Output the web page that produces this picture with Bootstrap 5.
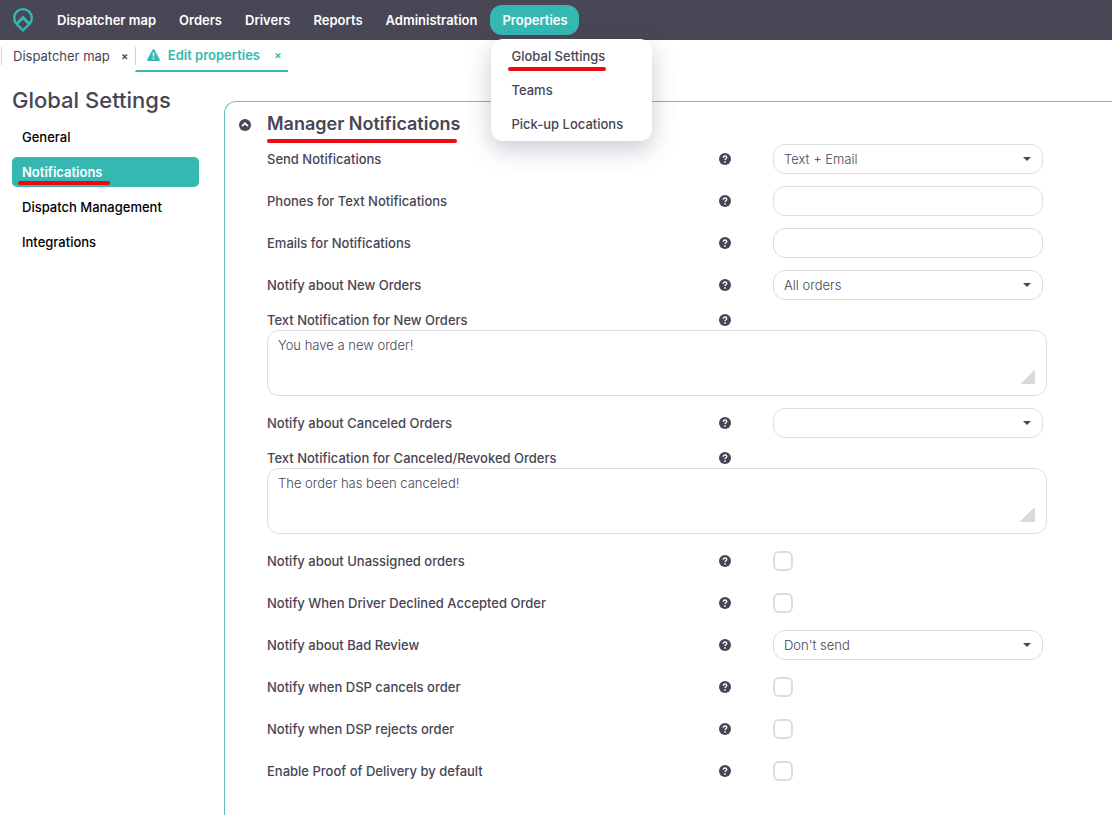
<!DOCTYPE html>
<html lang="en">
<head>
<meta charset="utf-8">
<meta name="viewport" content="width=device-width, initial-scale=1">
<title>Global Settings</title>
<link href="https://cdn.jsdelivr.net/npm/bootstrap@5.3.0/dist/css/bootstrap.min.css" rel="stylesheet">
<style>
:root { --ink: #484554; --teal: #35b8b2; --line: #dcdcdc; --red: #ee0a10; }
body { font-family: Inter, "Open Sans", sans-serif; font-size: 13px; line-height: 20px; color: var(--ink); min-height: 100vh; overflow-x: hidden; }
.topbar { background: #494655; height: 40px; padding: 0 12px; }
.topbar .brand-mark { width: 22px; margin-right: 11px; }
.topbar .nav-link { color: #fff; font-size: 13px; font-weight: 600; line-height: 20px; padding: 5px 11px 5px 12px; white-space: nowrap; }
.topbar .nav-link.active { background: var(--teal); border-radius: 12px; }
.topbar .dropdown { margin-left: 2px; }
.topbar .dropdown-menu { top: 34px; left: 1px; min-width: 161px; padding: 0; border: 0; border-radius: 12px; box-shadow: 0 8px 24px rgba(60, 70, 100, .28); }
.topbar .dropdown-item { font-size: 13px; font-weight: 500; line-height: 20px; padding: 7px 20px; color: var(--ink); background: none; }
.doc-tabs { height: 32px; padding-left: 1px; }
.doc-tab { border-left: 1px solid transparent; position: relative; padding: 0 6px 0 11px; height: 32px; }
.doc-tab::before { content: ""; position: absolute; left: -1px; top: 7px; height: 18px; border-left: 1px solid #d4d4d4; }
.doc-tab a { color: var(--ink); text-decoration: none; font-size: 13px; }
.doc-tab button { border: 0; background: none; padding: 0; width: 8px; font-size: 11px; line-height: 20px; font-weight: 600; color: inherit; margin-left: 11px; }
.doc-tab.current { border-bottom: 2px solid var(--teal); color: var(--teal); }
.doc-tab.current a { color: var(--teal); font-weight: 600; }
.doc-tab.current button { margin-left: 14px; }
.side { width: 224px; padding: 15px 25px 0 12px; }
.side h1 { font-size: 22px; line-height: 26px; font-weight: 500; margin: 0 0 9px; white-space: nowrap; }
.side .nav { gap: 5px; }
.side .nav-link { color: #000; font-size: 13px; font-weight: 500; line-height: 20px; padding: 5px 10px; border-radius: 5px; }
.side .nav-link.active { background: var(--teal); color: #fff; font-weight: 600; }
.panel { margin-top: 29px; border: solid #63c1bd; border-width: 1px 0 0 1px; border-radius: 12px 0 0 0; padding: 10px 12px 24px 13px; min-width: 0; }
.toggle { border: 0; background: none; padding: 0; width: 14px; height: 26px; line-height: 0; margin-right: 15px; }
.panel h2 { font-size: 18px; line-height: 24px; font-weight: 600; margin: 0 0 2px; }
.settings { max-width: 780px; }
.setting { display: grid; grid-template-columns: minmax(0, 1fr) 54px 270px; align-items: center; min-height: 42px; padding-right: 4px; font-weight: 500; }
.setting.stacked { min-height: 24px; padding-top: 4px; }
.help { border: 0; background: none; padding: 0; width: 12px; height: 12px; line-height: 0; display: flex; }
.settings .form-control, .settings .form-select { border: 1px solid var(--line); border-radius: 12px; font-size: 13px; font-weight: 300; line-height: 20px; color: var(--ink); padding: 4px 10px; height: 30px; }
.settings .form-select { background-image: url("data:image/svg+xml,%3Csvg xmlns='http://www.w3.org/2000/svg' viewBox='0 0 8 4'%3E%3Cpath fill='%23484554' d='M0 0h8L4 4z'/%3E%3C/svg%3E"); background-size: 8px 4px; background-position: right 11px center; }
.settings textarea.form-control { height: 66px; resize: none; }
.area { position: relative; margin-bottom: 6px; }
.area::after { content: ""; position: absolute; right: 12px; bottom: 12px; width: 15px; height: 15px; background: linear-gradient(135deg, transparent 50%, #dadada 50%); pointer-events: none; }
.settings .form-check-input { width: 20px; height: 20px; margin: 0; border: 2px solid var(--line); border-radius: 6px; }
.marked { position: relative; }
.marked::after { content: ""; position: absolute; left: 0; bottom: -4px; width: 100%; height: 4px; border-radius: 2px; background: var(--red); }
.dropdown-item .marked::after { left: -3px; bottom: -7px; width: 98px; }
.side .marked::after { left: -4px; width: 92px; bottom: -5px; }
.panel .marked::after { bottom: -9px; width: 190px; }
</style>
</head>
<body class="d-flex flex-column">
<svg class="d-none" aria-hidden="true">
  <symbol id="help" viewBox="0 0 12 12"><circle cx="6" cy="6" r="6" fill="#484554"/><path d="M4.200 4.700c0-2.300 3.600-2.200 3.600-.1C7.800 5.900 6 5.700 6 7.100" fill="none" stroke="#fff" stroke-width="1.300"/><circle cx="6" cy="8.900" r=".85" fill="#fff"/></symbol>
</svg>
<nav class="topbar d-flex align-items-center">
  <a href="#" class="brand-mark d-flex" aria-label="Home"><svg width="22" height="26" viewBox="0 0 22 26"><path d="M11 23.300 4.600 17A8.800 8.800 0 1 1 17.400 17Z" fill="none" stroke="#35b8b2" stroke-width="2.400"/><path d="M4.800 16.800 11 10.700 17.200 16.800" fill="none" stroke="#35b8b2" stroke-width="3"/></svg></a>
  <ul class="nav flex-nowrap">
    <li class="nav-item"><a class="nav-link" href="#">Dispatcher map</a></li>
    <li class="nav-item"><a class="nav-link" href="#">Orders</a></li>
    <li class="nav-item"><a class="nav-link" href="#">Drivers</a></li>
    <li class="nav-item"><a class="nav-link" href="#">Reports</a></li>
    <li class="nav-item"><a class="nav-link" href="#">Administration</a></li>
    <li class="nav-item dropdown"><a class="nav-link active" href="#" aria-expanded="true">Properties</a>
      <ul class="dropdown-menu show">
        <li><a class="dropdown-item" href="#"><span class="marked">Global Settings</span></a></li>
        <li><a class="dropdown-item" href="#">Teams</a></li>
        <li><a class="dropdown-item" href="#">Pick-up Locations</a></li>
      </ul>
    </li>
  </ul>
</nav>
<div class="doc-tabs d-flex">
  <div class="doc-tab d-flex align-items-center"><a href="#">Dispatcher map</a><button type="button" aria-label="Close Dispatcher map">×</button></div>
  <div class="doc-tab current d-flex align-items-center"><svg width="13" height="12" viewBox="0 0 13 12" class="me-2"><path d="M5.600.6q.9-1.200 1.800 0L12.800 10.400q.4 1.400-1 1.600H1.200Q-.2 11.800.2 10.400Z" fill="#35b8b2"/><path d="M6.500 3.500v4M6.500 8.700v1.600" stroke="#fff" stroke-width="1.600"/></svg><a href="#">Edit properties</a><button type="button" aria-label="Close Edit properties">×</button></div>
</div>
<div class="d-flex flex-grow-1">
  <aside class="side flex-shrink-0">
    <h1>Global Settings</h1>
    <nav class="nav flex-column">
      <a class="nav-link" href="#">General</a>
      <a class="nav-link active" href="#"><span class="marked">Notifications</span></a>
      <a class="nav-link" href="#">Dispatch Management</a>
      <a class="nav-link" href="#">Integrations</a>
    </nav>
  </aside>
  <main class="panel d-flex align-items-start flex-grow-1">
    <button class="toggle flex-shrink-0" type="button" aria-label="Collapse section"><svg width="12" height="12" viewBox="0 0 12 12"><circle cx="6" cy="6" r="6" fill="#484554"/><path d="M3 7.200 6 4.300 9 7.200" fill="none" stroke="#fff" stroke-width="1.800"/></svg></button>
    <form class="settings flex-grow-1">
      <h2><span class="marked">Manager Notifications</span></h2>
      <div class="setting"><label for="send">Send Notifications</label><button type="button" class="help" aria-label="Help"><svg width="12" height="12"><use href="#help"/></svg></button><select id="send" class="form-select"><option>Text + Email</option></select></div>
      <div class="setting"><label for="phones">Phones for Text Notifications</label><button type="button" class="help" aria-label="Help"><svg width="12" height="12"><use href="#help"/></svg></button><input id="phones" type="text" class="form-control"></div>
      <div class="setting"><label for="emails">Emails for Notifications</label><button type="button" class="help" aria-label="Help"><svg width="12" height="12"><use href="#help"/></svg></button><input id="emails" type="text" class="form-control"></div>
      <div class="setting"><label for="new">Notify about New Orders</label><button type="button" class="help" aria-label="Help"><svg width="12" height="12"><use href="#help"/></svg></button><select id="new" class="form-select"><option>All orders</option></select></div>
      <div class="setting stacked"><label for="newtext">Text Notification for New Orders</label><button type="button" class="help" aria-label="Help"><svg width="12" height="12"><use href="#help"/></svg></button></div>
      <div class="area"><textarea id="newtext" class="form-control">You have a new order!</textarea></div>
      <div class="setting"><label for="canceled">Notify about Canceled Orders</label><button type="button" class="help" aria-label="Help"><svg width="12" height="12"><use href="#help"/></svg></button><select id="canceled" class="form-select"><option></option></select></div>
      <div class="setting stacked"><label for="canceltext">Text Notification for Canceled/Revoked Orders</label><button type="button" class="help" aria-label="Help"><svg width="12" height="12"><use href="#help"/></svg></button></div>
      <div class="area"><textarea id="canceltext" class="form-control">The order has been canceled!</textarea></div>
      <div class="setting"><label for="unassigned">Notify about Unassigned orders</label><button type="button" class="help" aria-label="Help"><svg width="12" height="12"><use href="#help"/></svg></button><input id="unassigned" type="checkbox" class="form-check-input"></div>
      <div class="setting"><label for="declined">Notify When Driver Declined Accepted Order</label><button type="button" class="help" aria-label="Help"><svg width="12" height="12"><use href="#help"/></svg></button><input id="declined" type="checkbox" class="form-check-input"></div>
      <div class="setting"><label for="review">Notify about Bad Review</label><button type="button" class="help" aria-label="Help"><svg width="12" height="12"><use href="#help"/></svg></button><select id="review" class="form-select"><option>Don't send</option></select></div>
      <div class="setting"><label for="dspcancel">Notify when DSP cancels order</label><button type="button" class="help" aria-label="Help"><svg width="12" height="12"><use href="#help"/></svg></button><input id="dspcancel" type="checkbox" class="form-check-input"></div>
      <div class="setting"><label for="dspreject">Notify when DSP rejects order</label><button type="button" class="help" aria-label="Help"><svg width="12" height="12"><use href="#help"/></svg></button><input id="dspreject" type="checkbox" class="form-check-input"></div>
      <div class="setting"><label for="proof">Enable Proof of Delivery by default</label><button type="button" class="help" aria-label="Help"><svg width="12" height="12"><use href="#help"/></svg></button><input id="proof" type="checkbox" class="form-check-input"></div>
    </form>
  </main>
</div>
<script src="https://cdn.jsdelivr.net/npm/bootstrap@5.3.0/dist/js/bootstrap.bundle.min.js"></script>
</body>
</html>
